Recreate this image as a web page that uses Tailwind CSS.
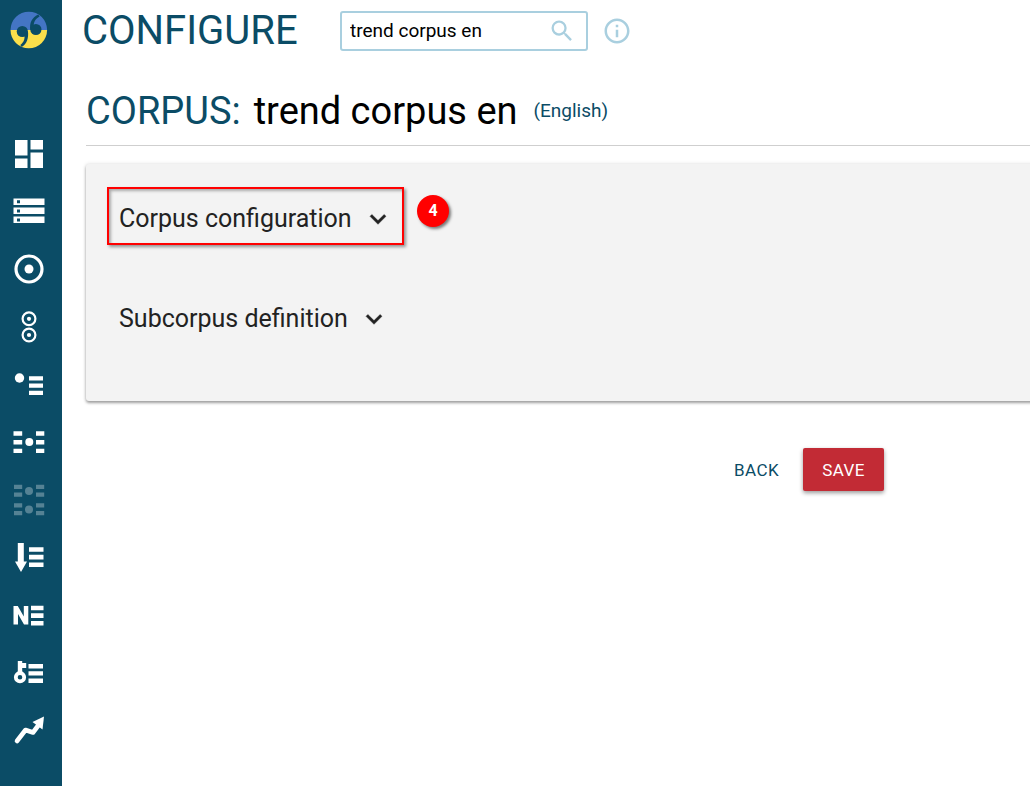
<!DOCTYPE html>
<html lang="en">
<head>
  <meta charset="UTF-8" />
  <meta name="viewport" content="width=device-width, initial-scale=1.0" />
  <title>Configure corpus</title>
  <script src="https://cdn.jsdelivr.net/npm/@tailwindcss/browser@4"></script>
</head>
<body class="flex min-h-screen bg-white font-['Roboto',sans-serif] text-black overflow-x-hidden">
  <!-- Sidebar -->
  <aside class="w-[62px] shrink-0 bg-[#0b4c66] flex flex-col">
    <a href="#" aria-label="Home" class="flex justify-center h-[125px] pt-[11px] pr-[5px]">
      <svg class="w-[38px] h-[38px]" viewBox="0 0 38 38">
        <path fill="#4475c4" d="M.500 19a18.300 18.300 0 0 1 36.600 0z" />
        <path fill="#fbdf4b" d="M.500 19a18.300 18.300 0 0 0 36.600 0z" />
        <g fill="#0b4c66">
          <circle cx="12.300" cy="20.500" r="5.600" />
          <circle cx="25.900" cy="18.500" r="5.600" />
          <path d="M17.900 20c1 7-1 13-6.200 16l-1.400-2c3.600-2.800 4.600-6 4.200-10z" />
          <path d="M20.300 19c-1-7 1.500-12.500 7.900-15.500l1.400 2c-4.400 2.500-6 5.500-5.800 9.500z" />
        </g>
      </svg>
    </a>
    <nav class="grid grid-rows-11 h-[634px] pr-[5px]">
      <a href="#" aria-label="Dashboard" class="flex items-center justify-center">
        <svg class="w-8 h-8" viewBox="0 0 32 32" fill="#fff"><path d="M2 2h12.500v15.500H2zM17.500 2H30v9.500H17.500zM2 20.500h12.500V30H2zM17.500 14.500H30V30H17.500z" /></svg>
      </a>
      <a href="#" aria-label="Select corpus" class="flex items-center justify-center">
        <svg class="w-8 h-8" viewBox="0 0 32 32" fill="#fff" fill-rule="evenodd"><path d="M.500 3.500h31V10H.500zM4 5.200v3h3v-3zM.500 12.500h31V19H.500zM4 14.400v3h3v-3zM.500 21.500h31V28H.500zM4 23.400v3h3v-3z" /></svg>
      </a>
      <a href="#" aria-label="Word sketch" class="flex items-center justify-center">
        <svg class="w-8 h-8" viewBox="0 0 32 32"><circle cx="16" cy="16" r="13" fill="none" stroke="#fff" stroke-width="3.200" /><circle cx="16" cy="16" r="4.500" fill="#fff" /></svg>
      </a>
      <a href="#" aria-label="Word sketch difference" class="flex items-center justify-center">
        <svg class="w-8 h-8" viewBox="0 0 32 32"><g fill="none" stroke="#fff" stroke-width="2.200"><circle cx="16" cy="7.800" r="6.400" /><circle cx="16" cy="24" r="6.400" /></g><g fill="#fff"><circle cx="16" cy="7.800" r="2.100" /><circle cx="16" cy="24" r="2.100" /></g></svg>
      </a>
      <a href="#" aria-label="Thesaurus" class="flex items-center justify-center">
        <svg class="w-8 h-8" viewBox="0 0 32 32" fill="#fff"><circle cx="6.500" cy="10" r="4.700" /><path d="M16 8.200h14v4.200H16zM16 15.500h14v4.200H16zM16 22.800h14v4.200H16z" /></svg>
      </a>
      <a href="#" aria-label="Concordance" class="flex items-center justify-center">
        <svg class="w-8 h-8" viewBox="0 0 32 32" fill="#fff"><circle cx="16.300" cy="16" r="4" /><path d="M.500 5.300h8.700v4.400H.500zM.500 14h8.700v4.400H.500zM.500 22.700h8.700v4.400H.500zM23 5.300h8.300v4.400H23zM23 14h8.300v4.400H23zM23 22.700h8.300v4.400H23z" /></svg>
      </a>
      <a href="#" aria-label="Parallel concordance" class="flex items-center justify-center opacity-30">
        <svg class="w-8 h-8" viewBox="0 0 32 32" fill="#fff"><circle cx="16" cy="7" r="4" /><circle cx="16" cy="25.500" r="4" /><path d="M1 .800h8.200v4.200H1zM1 8.500h8.200v4.200H1zM23 .800h8.200v4.200H23zM23 8.500h8.200v4.200H23zM1 19.300h8.200v4.200H1zM1 27h8.200v4.200H1zM23 19.300h8.200v4.200H23zM23 27h8.200v4.200H23z" /></svg>
      </a>
      <a href="#" aria-label="Wordlist" class="flex items-center justify-center">
        <svg class="w-8 h-8" viewBox="0 0 32 32" fill="#fff"><path d="M4.800 2h6v18.500H14L8 31 2 20.500h2.800zM16 6.200h14.500v4.600H16zM16 13.800h14.500v4.600H16zM16 21.400h14.500V26H16z" /></svg>
      </a>
      <a href="#" aria-label="N-grams" class="flex items-center justify-center">
        <svg class="w-8 h-8" viewBox="0 0 32 32" fill="#fff"><path d="M.500 7h4.300l6 10.500V7h4.500v18.500H11L5 15v10.500H.500zM18 6.700h12.500v4.600H18zM18 14.300h12.500v4.600H18zM18 21.900h12.500v4.600H18z" /></svg>
      </a>
      <a href="#" aria-label="Keywords" class="flex items-center justify-center">
        <svg class="w-8 h-8" viewBox="0 0 32 32" fill="#fff"><path d="M4.800 4h4.400v2h4v5h-4v5H4.800zM15.500 7H30v4.400H15.500zM15.500 14.200H30v4.400H15.500zM15.500 21.500H30v4.400H15.500z" /><circle cx="7" cy="20.200" r="4.200" fill="none" stroke="#fff" stroke-width="3.800" /></svg>
      </a>
      <a href="#" aria-label="Trends" class="flex items-center justify-center">
        <svg class="w-8 h-8" viewBox="0 0 32 32"><path d="M4 27l8.500-11 7.500 2.500 6-8" fill="none" stroke="#fff" stroke-width="4.600" stroke-linecap="round" stroke-linejoin="round" /><path d="M31 2.500L29.500 15.500 19.500 8z" fill="#fff" /></svg>
      </a>
    </nav>
  </aside>

  <main class="flex-1 min-w-0">
    <!-- Top bar -->
    <header class="flex items-center h-[62px] pl-5">
      <h1 class="w-[258px] text-[40px] leading-[48px] text-[#0b4c66]">CONFIGURE</h1>
      <div class="flex items-center w-[248px] h-10 border-2 border-[#a9cfdf] rounded-[3px]">
        <input type="text" aria-label="Corpus" value="trend corpus en" class="flex-1 min-w-0 pl-2 text-[19px] leading-6 outline-none" />
        <svg class="w-7 h-7 mr-[10px]" viewBox="0 0 24 24" fill="#a9cfdf"><path d="M15.500 14h-.79l-.28-.27A6.471 6.471 0 0 0 16 9.500 6.500 6.500 0 1 0 9.500 16c1.610 0 3.090-.59 4.230-1.570l.27.280v.79l5 4.990L20.490 19l-4.990-5zm-6 0C7.010 14 5 11.990 5 9.500S7.010 5 9.500 5 14 7.010 14 9.500 11.990 14 9.500 14z" /></svg>
      </div>
      <button type="button" aria-label="Corpus info" class="ml-[14px]">
        <svg class="w-[30px] h-[30px]" viewBox="0 0 24 24" fill="#a9cfdf"><path d="M11 17h2v-6h-2v6zm1-15C6.480 2 2 6.480 2 12s4.480 10 10 10 10-4.480 10-10S17.520 2 12 2zm0 18c-4.410 0-8-3.590-8-8s3.590-8 8-8 8 3.590 8 8-3.590 8-8 8zM11 9h2V7h-2v2z" /></svg>
      </button>
    </header>

    <section class="pl-6">
      <h2 class="flex items-center h-[84px] pt-[14px] border-b border-[#cfcfcf] text-[38px] leading-[48px]">
        <span class="text-[#0b4c66]">CORPUS:</span>
        <span class="ml-[13px]">trend corpus en</span>
        <span class="ml-4 text-[19px] leading-6 text-[#0b4c66]">(English)</span>
      </h2>

      <!-- Settings card -->
      <div class="-mr-4 mt-[18px] h-[237px] pt-[23px] pl-[21px] bg-[#f3f3f3] rounded-[3px] shadow-[0_2px_3px_rgba(0,0,0,0.35),0_0_4px_rgba(0,0,0,0.12)] text-[25px] leading-8 text-[#222]">
        <div class="flex">
          <button type="button" class="flex items-center w-[297px] h-[58px] pl-[10px] pt-[6px] border-2 border-[#ff0000] shadow-[2px_2px_3px_rgba(0,0,0,0.4),inset_2px_2px_3px_rgba(0,0,0,0.3)]">
            Corpus configuration
            <svg class="w-8 h-8 ml-[10px]" viewBox="0 0 24 24" fill="#222"><path d="M7.410 8.590L12 13.170l4.590-4.580L18 10l-6 6-6-6z" stroke="#222" stroke-width=".3" /></svg>
          </button>
          <span class="flex items-center justify-center w-8 h-8 mt-2 ml-[13px] rounded-full bg-[#ff0000] text-white text-base font-bold shadow-[2px_2px_3px_rgba(0,0,0,0.5)]">4</span>
        </div>
        <button type="button" class="flex items-center h-[58px] mt-[42px] ml-[2px] pl-[10px] pt-[6px]">
          Subcorpus definition
          <svg class="w-8 h-8 ml-[10px]" viewBox="0 0 24 24" fill="#222"><path d="M7.410 8.590L12 13.170l4.590-4.580L18 10l-6 6-6-6z" stroke="#222" stroke-width=".3" /></svg>
        </button>
      </div>

      <div class="flex items-center justify-end mt-[47px] pr-[146px] text-[17px] leading-6">
        <a href="#" class="px-6 tracking-wide text-[#0b4c66]">BACK</a>
        <button type="button" class="w-[81px] h-[43px] rounded-[2px] bg-[#c22b35] text-white tracking-wide shadow-[0_2px_4px_rgba(0,0,0,0.4)]">SAVE</button>
      </div>
    </section>
  </main>
</body>
</html>
